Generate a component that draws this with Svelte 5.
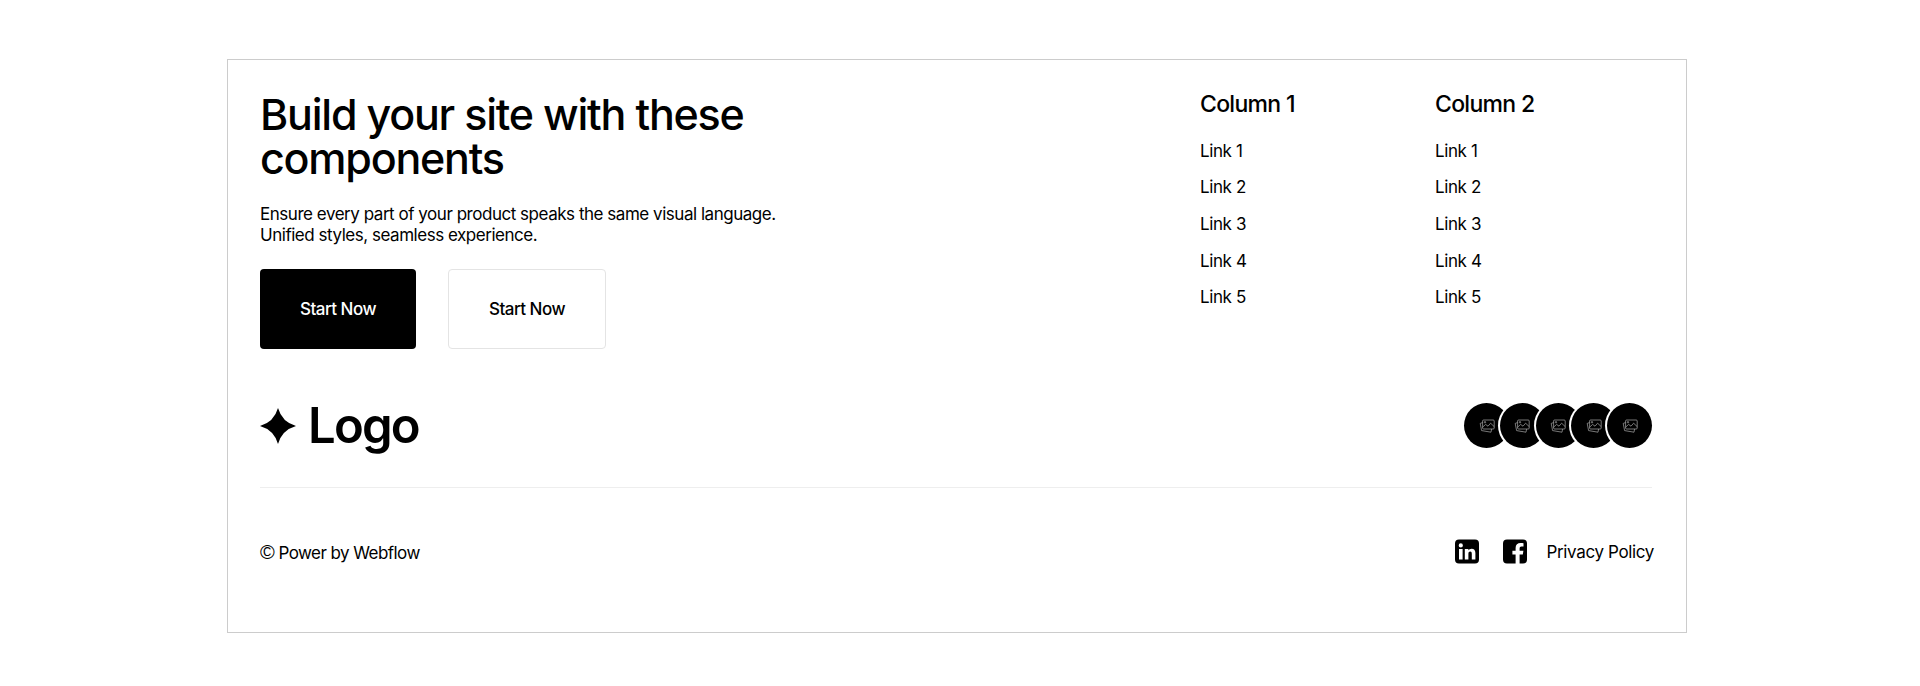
<script>
  const columns = ['Column 1', 'Column 2'];
  const links = ['Link 1', 'Link 2', 'Link 3', 'Link 4', 'Link 5'];
  const avatars = [0, 1, 2, 3, 4];
</script>

<div class="page">
  <footer class="frame">
    <div class="top">
      <div class="intro">
        <h1>Build your site with these components</h1>
        <p>Ensure every part of your product speaks the same visual language.<br />Unified styles, seamless experience.</p>
        <div class="actions">
          <a class="btn solid" href="#start">Start Now</a>
          <a class="btn ghost" href="#start">Start Now</a>
        </div>
      </div>
      <nav class="cols">
        {#each columns as title}
          <div class="col">
            <h3>{title}</h3>
            <ul>
              {#each links as link}
                <li><a href="#link">{link}</a></li>
              {/each}
            </ul>
          </div>
        {/each}
      </nav>
    </div>

    <div class="brand-row">
      <div class="logo">
        <svg class="star" viewBox="0 0 36 36" aria-hidden="true">
          <path d="M18 0Q22 14 36 18Q22 22 18 36Q14 22 0 18Q14 14 18 0Z" />
        </svg>
        <span>Logo</span>
      </div>
      <div class="avatars">
        {#each avatars as a}
          <span class="avatar">
            <svg viewBox="0 0 18 18" aria-hidden="true">
              <rect x="4.6" y="3" width="11.6" height="9" rx="1" />
              <path d="M4.6 10.2L7.6 7.4L10 9.2L12.6 6.2L16.2 9.6" />
              <circle cx="7" cy="5.2" r="0.7" />
              <path d="M4.6 5.6L2.2 6.4L3.6 13.6L13 15.2L13.6 12" />
            </svg>
          </span>
        {/each}
      </div>
    </div>

    <div class="bottom">
      <span class="copy"><span class="mark">©</span> Power by Webflow</span>
      <div class="legal">
        <svg class="social" viewBox="0 0 24 24" aria-hidden="true">
          <path fill-rule="evenodd" d="M4 0H20A4 4 0 0 1 24 4V20A4 4 0 0 1 20 24H4A4 4 0 0 1 0 20V4A4 4 0 0 1 4 0ZM4 9.5V20H7.6V9.5ZM5.8 3.8A2.1 2.1 0 1 0 5.8 8A2.1 2.1 0 1 0 5.8 3.8ZM9.8 9.5V20H13.4V14.4C13.4 12.8 14.1 12 15.2 12C16.3 12 16.8 12.8 16.8 14.4V20H20.4V13.6C20.4 10.6 18.9 9.2 16.7 9.2C15.2 9.2 14 9.9 13.4 11V9.5Z" />
        </svg>
        <svg class="social" viewBox="0 0 24 24" aria-hidden="true">
          <path d="M4 0H20A4 4 0 0 1 24 4V20A4 4 0 0 1 20 24H16.6V15H19.8L20.4 11.2H16.6V9C16.6 7.9 17.1 7.1 18.5 7.1H20.5V3.8C19.8 3.7 18.7 3.6 17.5 3.6C14.6 3.6 12.6 5.3 12.6 8.5V11.2H9.4V15H12.6V24H4A4 4 0 0 1 0 20V4A4 4 0 0 1 4 0Z" />
        </svg>
        <a class="policy" href="#privacy">Privacy Policy</a>
      </div>
    </div>
  </footer>
</div>

<style>
  :global(body) {
    margin: 0;
    background: #fff;
    color: #000;
    font-family: Inter, "Liberation Sans", Arial, sans-serif;
  }

  .page {
    height: 686px;
    padding-top: 59px;
    box-sizing: border-box;
  }

  .frame {
    width: 1460px;
    height: 574px;
    margin-left: 227px;
    padding: 32px 34px 0 32px;
    box-sizing: border-box;
    border: 1px solid #ccc;
  }

  .top {
    display: flex;
    justify-content: space-between;
    height: 258px;
  }

  .intro { width: 560px; }

  h1 {
    margin: 0;
    font-size: 43px;
    line-height: 44px;
    font-weight: 500;
    letter-spacing: -1.22px;
  }

  p {
    margin: 24px 0 0;
    font-size: 17px;
    line-height: 21px;
    letter-spacing: -0.47px;
  }

  a { color: inherit; text-decoration: none; }

  .actions {
    display: flex;
    gap: 32px;
    margin-top: 23px;
  }

  .btn {
    display: flex;
    align-items: center;
    justify-content: center;
    height: 80px;
    box-sizing: border-box;
    border-radius: 4px;
    font-size: 17px;
    font-weight: 500;
    letter-spacing: -0.5px;
  }

  .solid { width: 156px; background: #000; color: #fff; }
  .ghost { width: 158px; border: 1px solid #e4e4e4; }

  .cols {
    display: grid;
    grid-template-columns: 217px 217px;
    gap: 18px;
    width: 452px;
  }

  h3 {
    margin: -2px 0 21.5px;
    font-size: 23px;
    line-height: 28px;
    font-weight: 500;
    letter-spacing: -0.7px;
  }

  ul {
    margin: 0;
    padding: 0;
    list-style: none;
    display: flex;
    flex-direction: column;
    gap: 14.7px;
  }

  li { font-size: 17px; line-height: 22px; letter-spacing: -0.4px; }

  .brand-row {
    display: flex;
    justify-content: space-between;
    align-items: center;
    height: 138px;
    padding: 41px 0 27px;
    box-sizing: border-box;
    border-bottom: 1px solid #eee;
  }

  .logo {
    display: flex;
    align-items: center;
    gap: 12px;
    font-size: 49px;
    line-height: 56px;
    font-weight: 560;
    letter-spacing: -1.8px;
  }

  .star { width: 36px; height: 36px; fill: #000; }

  .avatars { display: flex; }

  .avatar {
    display: flex;
    align-items: center;
    justify-content: center;
    width: 45px;
    height: 45px;
    margin-left: -9.3px;
    border-radius: 50%;
    background: #000;
    box-shadow: 0 0 0 2px #fff;
  }

  .avatar:first-child { margin-left: 0; }

  .avatar svg {
    width: 18px;
    height: 18px;
    fill: none;
    stroke: #aaa;
    stroke-width: 0.7;
  }

  .bottom {
    display: flex;
    justify-content: space-between;
    align-items: center;
    height: 128px;
  }

  .copy { font-size: 17px; letter-spacing: -0.55px; }
  .mark { font-family: "Liberation Sans", sans-serif; font-size: 20px; line-height: 1; }
  .policy { font-size: 17px; letter-spacing: -0.36px; }

  .legal {
    display: flex;
    align-items: center;
    gap: 24px;
  }

  .social { width: 24px; height: 25px; margin-bottom: 2px; fill: #000; }

  .policy { margin-left: -4px; margin-right: -2px; }
</style>
